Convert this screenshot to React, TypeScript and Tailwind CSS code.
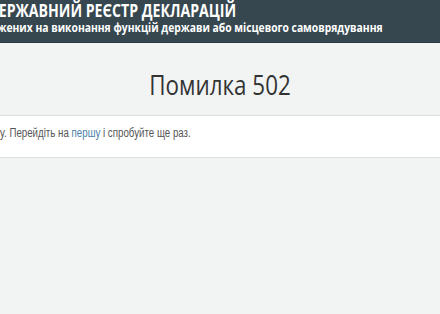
export default function App() {
  return (
    <div className="min-h-[314px] w-[440px] overflow-hidden bg-[#f2f4f4] font-['Open_Sans',sans-serif]">
      <header className="h-[43px] overflow-hidden border-b border-[#2c3a42] bg-[#36474f] text-white">
        <div className="ml-[-12px] origin-left scale-x-[0.83] whitespace-nowrap pt-[1px] text-[17px] font-bold leading-[20px]">
          ДЕРЖАВНИЙ РЕЄСТР ДЕКЛАРАЦІЙ
        </div>
        <div className="ml-[-54px] origin-left scale-x-[0.86] whitespace-nowrap text-[12px] font-bold leading-[13px]">
          уповноважених на виконання функцій держави або місцевого самоврядування
        </div>
      </header>
      <h1 className="scale-x-[0.8] pb-[14px] pt-[24px] text-center text-[28px] leading-[34px] text-[#333]">
        Помилка 502
      </h1>
      <div className="overflow-hidden border-y border-[#dcdfe0] bg-white pb-[16px] pt-[9px]">
        <p className="ml-[-25px] origin-left scale-x-[0.81] whitespace-nowrap font-['Liberation_Sans',Arial,sans-serif] text-[12px] leading-[16px] text-[#555]">
          запиту. Перейдіть на <a className="text-[#4a7fa8]">першу</a> і спробуйте ще раз.
        </p>
      </div>
    </div>
  );
}
